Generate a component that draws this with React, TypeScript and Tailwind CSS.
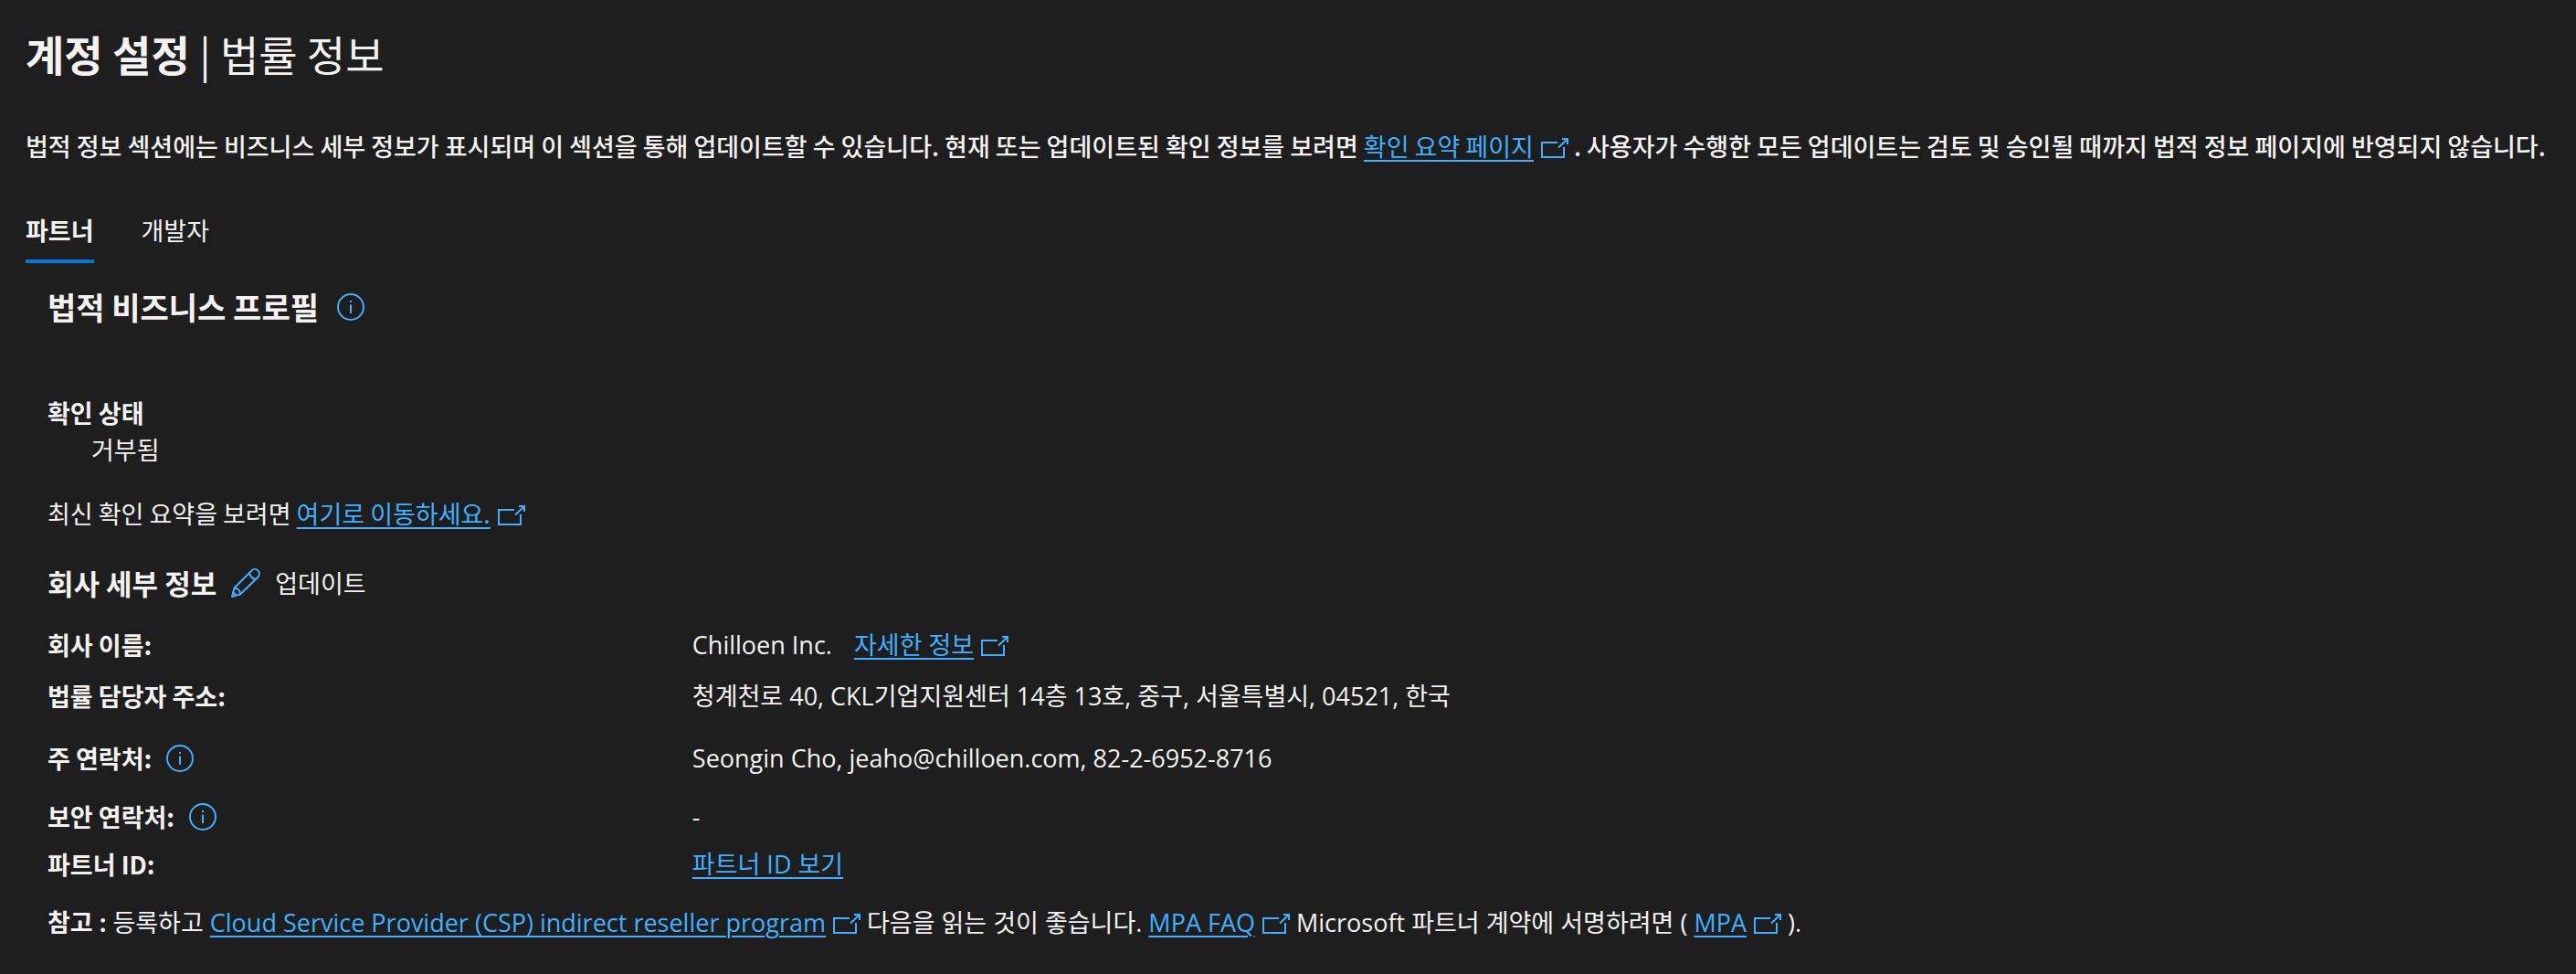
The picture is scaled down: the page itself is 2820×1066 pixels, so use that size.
import type { ReactNode } from "react";

function InfoIcon() {
  return (
    <svg viewBox="0 0 30 30" className="size-[30px] shrink-0" fill="none" aria-hidden="true">
      <circle cx="15" cy="15" r="14" stroke="currentColor" strokeWidth="2" />
      <path d="M15 12.500v9.500" stroke="currentColor" strokeWidth="2" />
      <path d="M14 8h2v2h-2z" fill="currentColor" />
    </svg>
  );
}

function ExternalIcon() {
  return (
    <svg viewBox="0 0 30 22" className="mb-1 ml-2 inline-block h-[22px] w-[30px]" fill="none" stroke="currentColor" strokeWidth="2" aria-hidden="true">
      <path d="M18 5H1v16h24V10" />
      <path d="M19 10.500 28.500 1.500M23 1h6v6" />
    </svg>
  );
}

function PencilIcon() {
  return (
    <svg viewBox="0 0 32 32" className="size-8" fill="none" stroke="currentColor" strokeWidth="2" strokeLinejoin="round" aria-hidden="true">
      <path d="M1 31l2.500-9.500L22.500 2.500a4.400 4.400 0 0 1 7 7L10 28.500z" />
      <path d="M20 5c1 4 3.500 6.500 7 7M3.500 21.500c4.500.5 6.500 2.500 6.500 7M2.500 26.500l3 3" />
    </svg>
  );
}

function ExternalLink({ children }: { children: ReactNode }) {
  return (
    <a href="#" className="font-normal whitespace-nowrap text-[#40b0ff]">
      <span className="underline decoration-2 underline-offset-4">{children}</span>
      <ExternalIcon />
    </a>
  );
}

function InfoButton({ label }: { label: string }) {
  return (
    <button type="button" aria-label={label} className="flex text-[#40b0ff]">
      <InfoIcon />
    </button>
  );
}

// Rows with an info button are taller and sit lower than the plain ones
function DetailRow({ label, info, children }: { label: string; info?: boolean; children: ReactNode }) {
  return (
    <div className={info ? "flex items-center pt-5 pb-1" : "flex items-center py-2"}>
      <dt className="flex w-[25.5%] items-center gap-4 font-bold">
        {label}
        {info && <InfoButton label={`${label} 정보`} />}
      </dt>
      <dd className="font-['Open_Sans','Noto_Sans_CJK_KR',sans-serif]">{children}</dd>
    </div>
  );
}

export default function App() {
  return (
    <main className="min-h-screen bg-[#1e1e1e] pt-7 pl-7 font-['Noto_Sans_CJK_KR',sans-serif] text-[27px] leading-10 text-[#f3f2f1]">
      <h1 className="text-[46px] leading-[60px] font-bold">
        계정 설정 <span className="font-normal">| 법률 정보</span>
      </h1>

      <p className="mt-13 pr-7 font-medium">
        법적 정보 섹션에는 비즈니스 세부 정보가 표시되며 이 섹션을 통해 업데이트할 수 있습니다. 현재 또는 업데이트된 확인 정보를 보려면{" "}
        <ExternalLink>확인 요약 페이지</ExternalLink> . 사용자가 수행한 모든 업데이트는 검토 및 승인될 때까지 법적 정보 페이지에 반영되지 않습니다.
      </p>

      <div role="tablist" className="mt-13 flex gap-13">
        <button type="button" role="tab" aria-selected="true" className="border-b-4 border-[#0078d4] pb-3 font-bold">
          파트너
        </button>
        <button type="button" role="tab" aria-selected="false" className="border-b-4 border-transparent pb-3">
          개발자
        </button>
      </div>

      <section className="pl-6">
        <div className="mt-6 flex items-center gap-5">
          <h2 className="text-[34px] leading-[48px] font-bold">법적 비즈니스 프로필</h2>
          <InfoButton label="법적 비즈니스 프로필 정보" />
        </div>

        <h3 className="mt-18 font-bold">확인 상태</h3>
        <p className="pl-12">거부됨</p>

        <p className="mt-[30px]">
          최신 확인 요약을 보려면 <ExternalLink>여기로 이동하세요.</ExternalLink>
        </p>

        <div className="mt-8 flex items-center gap-4">
          <h3 className="text-[31px] leading-[48px] font-bold">회사 세부 정보</h3>
          <button type="button" className="flex items-center gap-4">
            <span className="text-[#40b0ff]">
              <PencilIcon />
            </span>
            업데이트
          </button>
        </div>

        <dl className="mt-4">
          <DetailRow label="회사 이름:">
            <span className="mr-6">Chilloen Inc.</span>
            <ExternalLink>자세한 정보</ExternalLink>
          </DetailRow>
          <DetailRow label="법률 담당자 주소:">
            청계천로 40, CKL기업지원센터 14층 13호, 중구, 서울특별시, 04521, 한국
          </DetailRow>
          <DetailRow label="주 연락처:" info>
            Seongin Cho, jeaho@chilloen.com, 82-2-6952-8716
          </DetailRow>
          <DetailRow label="보안 연락처:" info>
            -
          </DetailRow>
          <DetailRow label="파트너 ID:">
            <a href="#" className="text-[#40b0ff] underline decoration-2 underline-offset-4">
              파트너 ID 보기
            </a>
          </DetailRow>
        </dl>

        <p className="mt-4 font-['Open_Sans','Noto_Sans_CJK_KR',sans-serif]">
          <strong>참고 :</strong> 등록하고 <ExternalLink>Cloud Service Provider (CSP) indirect reseller program</ExternalLink> 다음을 읽는 것이 좋습니다.{" "}
          <ExternalLink>MPA FAQ</ExternalLink> Microsoft 파트너 계약에 서명하려면 ( <ExternalLink>MPA</ExternalLink> ).
        </p>
      </section>
    </main>
  );
}
